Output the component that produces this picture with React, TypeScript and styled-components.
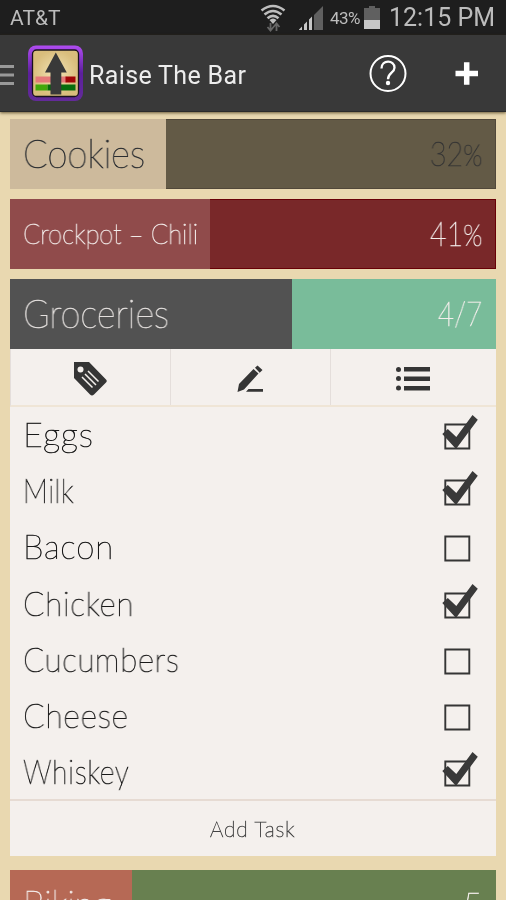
import React from 'react';
import styled, { createGlobalStyle } from 'styled-components';

const Global = createGlobalStyle`
  *{box-sizing:border-box}
  html,body{margin:0;background:#e9d8b0}
  body{height:900px;overflow:hidden}
  svg{display:block}
`;
const Screen = styled.div`width:506px;height:900px;overflow:hidden;display:flex;flex-direction:column;background:#e9d8b0;`;
const StatusBar = styled.header`
  height:35px;flex:none;background:#1e1e1e;color:#bcbcbc;display:flex;align-items:center;
  padding:0 11px 0 10px;font-family:Roboto,sans-serif;
`;
const Label = styled.span<{ $size: number; $spacing?: number; $ml?: number }>`
  font-size:${p => p.$size}px;letter-spacing:${p => p.$spacing ?? 0}px;margin-left:${p => p.$ml ?? 0}px;
  line-height:36px;padding-top:1px;white-space:nowrap;will-change:transform;
`;
const Gap = styled.span<{ $w: number }>`width:${p => p.$w}px;flex:none;`;
const StatusIcons = styled.div`margin-left:auto;display:flex;align-items:center;height:35px;`;
const ActionBar = styled.nav`
  height:77px;flex:none;background:#393939;display:flex;align-items:center;
  box-shadow:0 1px 3px rgba(60,45,15,.75);border-bottom:1px solid #2b2b2b;position:relative;
`;
const Title = styled.h1`
  margin:0 0 0 6px;padding-top:5px;font:400 25px/34px Roboto,sans-serif;color:#ededed;letter-spacing:.35px;white-space:nowrap;flex:1;
  will-change:transform;
`;
const List = styled.main`padding:7px 10px 0;display:flex;flex-direction:column;gap:10px;`;
const Bar = styled.section<{ $bg: string; $line: string }>`
  height:70px;flex:none;display:flex;background:${p => p.$bg};position:relative;
  box-shadow:inset 0 0 0 1px ${p => p.$line};
`;
const Fill = styled.div<{ $w: number; $bg: string }>`width:${p => p.$w}px;flex:none;background:${p => p.$bg};`;
const BarText = styled.div`
  position:absolute;inset:0;display:flex;justify-content:space-between;padding:0 14px 0 13px;
  font-family:Lato,sans-serif;line-height:68px;white-space:nowrap;
`;
const Thin = styled.span<{ $size: number; $color: string; $sx?: number; $spacing?: number; $right?: boolean }>`
  font-family:Lato,sans-serif;font-weight:100;font-size:${p => p.$size}px;color:${p => p.$color};
  -webkit-text-stroke:.65px ${p => p.$color};letter-spacing:${p => p.$spacing ?? 0}px;
  white-space:nowrap;display:inline-block;will-change:transform;
  transform:scaleX(${p => p.$sx ?? 1});transform-origin:${p => (p.$right ? 'right' : 'left')} center;
  small{font-size:.88em}
`;
const Card = styled.section`height:507px;margin-top:-10px;flex:none;background:#f4f0ed;display:flex;flex-direction:column;`;
const Tools = styled.div`
  height:58px;flex:none;display:grid;grid-template-columns:160px 160px 1fr;
  border-bottom:2px solid #efe5d6;border-left:1px solid #e4dedb;
`;
const Tool = styled.button`
  border:0;border-right:1px solid #e4dedb;background:none;padding:3px 0 0;display:flex;align-items:center;justify-content:center;
  &:first-child{padding-right:2px}
  &:last-child{border-right:0;padding-right:2px}
`;
const Tasks = styled.div`margin-top:-1px;`;
const Task = styled.label`
  height:56.2px;display:flex;align-items:center;justify-content:space-between;padding:0 18px 0 13px;
`;
const AddTask = styled.button`
  margin-top:auto;height:57px;flex:none;border:0;border-top:2px solid #e6dbd3;background:none;padding:0;
  span{transform-origin:center}
`;
const Spacer = styled.div`height:4px;margin-bottom:-10px;flex:none;`;

const Menu = () => (
  <svg width="28" height="56" viewBox="0 0 28 56"><g fill="#999"><path d="M0 20h14v3H0zM0 28.500h14v3H0zM0 37h14v3H0z" /></g></svg>
);
const Logo = () => (
  <svg width="55" height="56" viewBox="0 0 55 56">
    <defs>
      <linearGradient id="purple" x2="0" y2="1"><stop stopColor="#b04cf2" /><stop offset=".5" stopColor="#5c1f9c" /><stop offset="1" stopColor="#632b99" /></linearGradient>
      <radialGradient id="sand"><stop stopColor="#f2e3b5" /><stop offset="1" stopColor="#d9bd7c" /></radialGradient>
    </defs>
    <rect y=".5" width="55" height="55.500" rx="8" fill="url(#purple)" />
    <rect x="4.500" y="5" width="46" height="46.500" rx="4" fill="url(#sand)" stroke="#19121c" strokeWidth="1.300" />
    <path fill="#e57878" d="M7.500 31.500h31v6H7.500z" /><path fill="#a00507" d="M37.500 31.500h10v6h-10z" />
    <path fill="#42a80b" d="M7.500 39.500h12v6H7.500z" /><path fill="#076d0d" d="M19.500 39.500h28v6h-28z" />
    <path d="M27.800 7.500l11 20h-5.500v22H22.500v-22H17z" fill="#393939" />
  </svg>
);
const Help = () => (
  <svg width="38" height="38" viewBox="0 0 38 38" fill="none" stroke="#fff">
    <circle cx="19" cy="19.500" r="17.500" strokeWidth="2" />
    <path d="M12.500 14.500c0-9 13-9 13-.8 0 5-6.500 5-6.500 11.500" strokeWidth="2.300" /><circle cx="19" cy="29" r="2.200" fill="#fff" stroke="none" />
  </svg>
);
const Plus = () => <svg width="68" height="38" viewBox="0 0 68 38"><path d="M17.500 19.500h22.500M28.700 8.300v22.500" stroke="#fff" strokeWidth="5.500" /></svg>;
const Wifi = () => (
  <svg width="26" height="30" viewBox="0 0 26 30" fill="none" stroke="#bebebe" strokeWidth="2.600">
    <path d="M1.500 7.500Q13-1.500 24.500 7.500M4.500 11.500Q13 4.500 21.500 11.500M7.500 15.300Q13 10.500 18.500 15.300" /><path d="M9.500 17Q13 14 16.500 17L13 21z" fill="#bebebe" stroke="none" />
    <path d="M10.500 20v7M7.500 24l3 3.500 3-3.500M16.500 28v-7M13.500 24l3-3.500 3 3.500" stroke="#666" strokeWidth="1.800" />
  </svg>
);
const Signal = () => (
  <svg width="25" height="24" viewBox="0 0 25 24"><path d="M16 9l9-9v24h-9z" fill="#606060" /><path d="M1 23.500l3-3v3.500H1zM6 18.500l3-3V24H6zM11 13.500l3-3V24h-3z" fill="#c7c7c7" /></svg>
);
const Battery = () => (
  <svg width="16" height="23" viewBox="0 0 16 23"><path d="M5 0h6v2h5v21H0V2h5z" fill="#606060" /><path d="M0 14h16v9H0z" fill="#c7c7c7" /></svg>
);
const Tag = () => (
  <svg width="34" height="34" viewBox="0 0 34 34">
    <path d="M1 0h15l17 17.500q1.500 1.500 0 3L21 32.500q-2 2-4 0L1 16z" fill="#353535" /><circle cx="7.500" cy="7.500" r="3" fill="#f4f0ed" />
    <path d="M15 9l10.500 10.500M12 12l11 11M9 15l10.500 10.500" stroke="#f4f0ed" strokeWidth="1.500" />
  </svg>
);
const Pencil = () => (
  <svg width="28" height="28" viewBox="0 0 28 28" fill="#353535"><path d="M2 19L16.500 4l5 4.500L7 24.500.500 27zM18 2.800L20.500.500l5 4.500-2.800 2.800zM11.500 24H26v2.800H9z" /></svg>
);
const ListIcon = () => (
  <svg width="36" height="26" viewBox="0 0 36 26" fill="#353535"><circle cx="3.500" cy="3.500" r="2.500" /><circle cx="3.500" cy="12.500" r="2.500" /><circle cx="3.500" cy="22" r="2.500" /><path d="M9 1h26v4.500H9zM9 10.500h26V15H9zM9 20h26v4.500H9z" /></svg>
);
const Check = ({ on }: { on: boolean }) => (
  <svg width="40" height="40" viewBox="0 0 40 40">
    <path d="M7.300 10.500h24v24h-24z" fill="none" stroke="#353535" strokeWidth="1.900" />
    {on && <path d="M4.300 20l5.500-5 8.500 8L34.500 1l5.300 4.800L18 35z" fill="#393939" />}
  </svg>
);

const tasks: { name: string; done: boolean; sx: number }[] = [
  { name: 'Eggs', done: true, sx: 1.03 },
  { name: 'Milk', done: true, sx: 0.84 },
  { name: 'Bacon', done: false, sx: 1 },
  { name: 'Chicken', done: true, sx: 0.95 },
  { name: 'Cucumbers', done: false, sx: 0.94 },
  { name: 'Cheese', done: false, sx: 0.96 },
  { name: 'Whiskey', done: true, sx: 0.86 },
];

export default function App() {
  return (
    <Screen>
      <Global />
      <StatusBar>
        <Label $size={21}>AT&amp;T</Label>
        <StatusIcons>
          <Wifi /><Gap $w={12} /><Signal />
          <Label $size={17} $ml={7} $spacing={-0.5}>43%</Label><Gap $w={4} /><Battery />
          <Label $size={25} $ml={9}>12:15 PM</Label>
        </StatusIcons>
      </StatusBar>
      <ActionBar><Menu /><Logo /><Title>Raise The Bar</Title><Help /><Gap $w={31} /><Plus /></ActionBar>
      <List>
        <Bar $bg="#635a46" $line="#51483a">
          <Fill $w={156} $bg="#cdba9c" />
          <BarText><Thin $size={39} $color="#292c30" $sx={0.93}>Cookies</Thin><Thin $right $size={33} $color="#353535" $sx={0.87}>32<small>%</small></Thin></BarText>
        </Bar>
        <Bar $bg="#792829" $line="#680006">
          <Fill $w={199.5} $bg="#904b4b" />
          <BarText><Thin $size={28} $color="#f4eeec" $sx={0.91}>Crockpot – Chili</Thin><Thin $right $size={33} $color="#f4eeec" $sx={0.87}>41<small>%</small></Thin></BarText>
        </Bar>
        <Bar $bg="#79bc9a" $line="#79bc9a">
          <Fill $w={282} $bg="#525252" />
          <BarText><Thin $size={39} $color="#e4e0de" $sx={0.925}>Groceries</Thin><Thin $right $size={33} $color="#f4eeec" $sx={0.85}>4/7</Thin></BarText>
        </Bar>
        <Card>
          <Tools><Tool aria-label="Tag"><Tag /></Tool><Tool aria-label="Edit"><Pencil /></Tool><Tool aria-label="List"><ListIcon /></Tool></Tools>
          <Tasks>
            {tasks.map(t => <Task key={t.name}><Thin $size={33} $color="#191919" $spacing={0.8} $sx={t.sx}>{t.name}</Thin><Check on={t.done} /></Task>)}
          </Tasks>
          <AddTask><Thin $size={21} $color="#444" $spacing={0.8}>Add Task</Thin></AddTask>
        </Card>
        <Spacer />
        <Bar $bg="#688050" $line="#688050">
          <Fill $w={122} $bg="#b66955" />
          <BarText><Thin $size={39} $color="#f4eeec" $sx={0.9}>Biking</Thin><Thin $right $size={33} $color="#f4eeec">5</Thin></BarText>
        </Bar>
      </List>
    </Screen>
  );
}
